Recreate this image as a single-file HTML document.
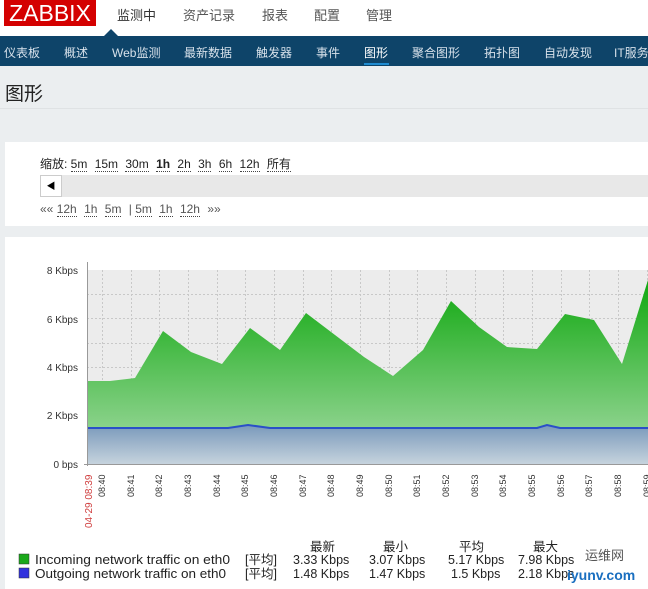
<!DOCTYPE html><html><head><meta charset="utf-8"><style>
*{margin:0;padding:0;box-sizing:border-box}
body{width:648px;height:589px;overflow:hidden;background:#ebeef0;font-family:"Liberation Sans","Noto Sans CJK SC",sans-serif;position:relative}
.hdr{position:absolute;left:0;top:0;width:648px;height:36px;background:#fff}
.logo{position:absolute;left:4px;top:0;width:92px;height:26px;background:#d40000;color:#fff;font-size:23px;line-height:26px;text-align:center}
.top a{position:absolute;top:5px;font-size:13px;color:#555;white-space:nowrap}
.nav{position:absolute;left:0;top:36px;width:648px;height:30px;background:#0e4469;overflow:hidden}
.nav span{position:absolute;top:8px;font-size:12px;color:#d7e1ea;white-space:nowrap}
.tri{position:absolute;left:104px;top:29px;width:0;height:0;border-left:7px solid transparent;border-right:7px solid transparent;border-bottom:7px solid #0e4469}
h1{position:absolute;left:5px;top:79px;font-size:19px;font-weight:normal;color:#222}
.line{position:absolute;left:0;top:108px;width:648px;height:1px;background:#dfe2e4}
.p1{position:absolute;left:5px;top:142px;width:643px;height:84px;background:#fff}
.p2{position:absolute;left:5px;top:237px;width:643px;height:352px;background:#fff}
.t{position:absolute;font-size:12px;color:#222;white-space:nowrap}
.t u{text-decoration:none;border-bottom:1px dotted #444;margin-right:4px}
</style></head><body>
<div class="hdr"><div class="logo">ZABBIX</div>
<div class="top"><a style="left:117px;color:#333">监测中</a><a style="left:183px">资产记录</a><a style="left:262px">报表</a><a style="left:314px">配置</a><a style="left:366px">管理</a></div>
<div class="tri"></div></div>
<div class="nav"><span style="left:4px">仪表板</span><span style="left:64px">概述</span><span style="left:112px">Web监测</span><span style="left:184px">最新数据</span><span style="left:256px">触发器</span><span style="left:316px">事件</span><span style="left:364px;color:#fff">图形</span><span style="left:412px">聚合图形</span><span style="left:484px">拓扑图</span><span style="left:544px">自动发现</span><span style="left:614px">IT服务</span>
<div style="position:absolute;left:364px;top:27px;width:25px;height:2px;background:#1f8bd0"></div></div>
<h1>图形</h1><div class="line"></div>
<div class="p1">
<div class="t" style="left:35px;top:13px">缩放: <u>5m</u> <u>15m</u> <u>30m</u> <b><u>1h</u></b> <u>2h</u> <u>3h</u> <u>6h</u> <u>12h</u> <u>所有</u></div>
<div style="position:absolute;left:35px;top:33px;width:608px;height:22px;background:#e8e8e8"></div>
<div style="position:absolute;left:35px;top:33px;width:22px;height:22px;background:#fff;border:1px solid #ccc;font-size:9px;text-align:center;line-height:20px">◀</div>
<div class="t" style="left:35px;top:60px;color:#555">«« <u>12h</u> <u>1h</u> <u>5m</u> | <u>5m</u> <u>1h</u> <u>12h</u> »»</div>
</div>
<div class="p2"></div>
<svg style="position:absolute;left:0;top:0" width="648" height="589" font-family="Liberation Sans,sans-serif">
<defs><linearGradient id="g" x1="0" y1="0" x2="0" y2="1"><stop offset="0" stop-color="#10a810"/><stop offset="1" stop-color="#a8dca8"/></linearGradient>
<linearGradient id="b" x1="0" y1="0" x2="0" y2="1"><stop offset="0" stop-color="#7999bb"/><stop offset="1" stop-color="#c6d3dd"/></linearGradient></defs>
<rect x="87" y="270" width="561" height="194" fill="#ececec"/>
<g stroke="#c8c8c8" stroke-dasharray="2,2" stroke-width="1">
<line x1="87" y1="294.5" x2="648" y2="294.5"/><line x1="87" y1="318.5" x2="648" y2="318.5"/><line x1="87" y1="343.5" x2="648" y2="343.5"/><line x1="87" y1="367.5" x2="648" y2="367.5"/><line x1="87" y1="391.5" x2="648" y2="391.5"/><line x1="87" y1="415.5" x2="648" y2="415.5"/><line x1="87" y1="440.5" x2="648" y2="440.5"/>
<path d="M102.5 270V464M131.5 270V464M159.5 270V464M188.5 270V464M217.5 270V464M245.5 270V464M274.5 270V464M303.5 270V464M331.5 270V464M360.5 270V464M389.5 270V464M417.5 270V464M446.5 270V464M475.5 270V464M503.5 270V464M532.5 270V464M561.5 270V464M589.5 270V464M618.5 270V464M647.5 270V464"/>
</g>
<polygon fill="url(#g)" points="87,381 110,381 135,378 163,331 191,352 222,364 250,328 280,350 306,313 335,335 364,357 393,376 423,350 451,301 479,327 507,347 537,349 565,314 594,320 622,364 648,280 648,464 87,464"/>
<polygon fill="url(#b)" points="87,428 228,428 248,425 270,428 537,428 547,425 560,428 648,428 648,464 87,464"/>
<polyline fill="none" stroke="#2a4fc8" stroke-width="2" points="87,428 228,428 248,425 270,428 537,428 547,425 560,428 648,428"/>
<line x1="87.5" y1="262" x2="87.5" y2="466" stroke="#999"/><line x1="84" y1="464.5" x2="648" y2="464.5" stroke="#999"/>
<g font-size="10" fill="#333" text-anchor="end"><text x="78" y="274">8 Kbps</text><text x="78" y="323">6 Kbps</text><text x="78" y="371">4 Kbps</text><text x="78" y="419">2 Kbps</text><text x="78" y="468">0 bps</text></g>
<text transform="translate(92,528) rotate(-90)" font-size="10" fill="#d04040">04-29 08:39</text>
<g font-size="9" fill="#333">
<text transform="translate(105,497) rotate(-90)">08:40</text><text transform="translate(134,497) rotate(-90)">08:41</text><text transform="translate(162,497) rotate(-90)">08:42</text><text transform="translate(191,497) rotate(-90)">08:43</text><text transform="translate(220,497) rotate(-90)">08:44</text><text transform="translate(248,497) rotate(-90)">08:45</text><text transform="translate(277,497) rotate(-90)">08:46</text><text transform="translate(306,497) rotate(-90)">08:47</text><text transform="translate(334,497) rotate(-90)">08:48</text><text transform="translate(363,497) rotate(-90)">08:49</text><text transform="translate(392,497) rotate(-90)">08:50</text><text transform="translate(420,497) rotate(-90)">08:51</text><text transform="translate(449,497) rotate(-90)">08:52</text><text transform="translate(478,497) rotate(-90)">08:53</text><text transform="translate(506,497) rotate(-90)">08:54</text><text transform="translate(535,497) rotate(-90)">08:55</text><text transform="translate(564,497) rotate(-90)">08:56</text><text transform="translate(592,497) rotate(-90)">08:57</text><text transform="translate(621,497) rotate(-90)">08:58</text><text transform="translate(650,497) rotate(-90)">08:59</text></g>
<g font-size="12.5" fill="#222" font-family="Liberation Sans,Noto Sans CJK SC,sans-serif">
<text x="310" y="551">最新</text><text x="383" y="551">最小</text><text x="459" y="551">平均</text><text x="533" y="551">最大</text>
<rect x="19" y="554" width="10" height="10" fill="#1aa81a" stroke="#333" stroke-width=".5"/><text x="35" y="564" textLength="195" lengthAdjust="spacingAndGlyphs">Incoming network traffic on eth0</text><text x="245" y="564">[平均]</text><text x="293" y="564">3.33 Kbps</text><text x="369" y="564">3.07 Kbps</text><text x="448" y="564">5.17 Kbps</text><text x="518" y="564">7.98 Kbps</text>
<rect x="19" y="568" width="10" height="10" fill="#3333dd" stroke="#333" stroke-width=".5"/><text x="35" y="578" textLength="191" lengthAdjust="spacingAndGlyphs">Outgoing network traffic on eth0</text><text x="245" y="578">[平均]</text><text x="293" y="578">1.48 Kbps</text><text x="369" y="578">1.47 Kbps</text><text x="451" y="578">1.5 Kbps</text><text x="518" y="578">2.18 Kbps</text>
<text x="585" y="560" fill="#555" font-size="13">运维网</text><text x="567" y="580" fill="#1a6fc0" font-size="14" font-weight="bold">iyunv.com</text></g>
</svg>
</body></html>
